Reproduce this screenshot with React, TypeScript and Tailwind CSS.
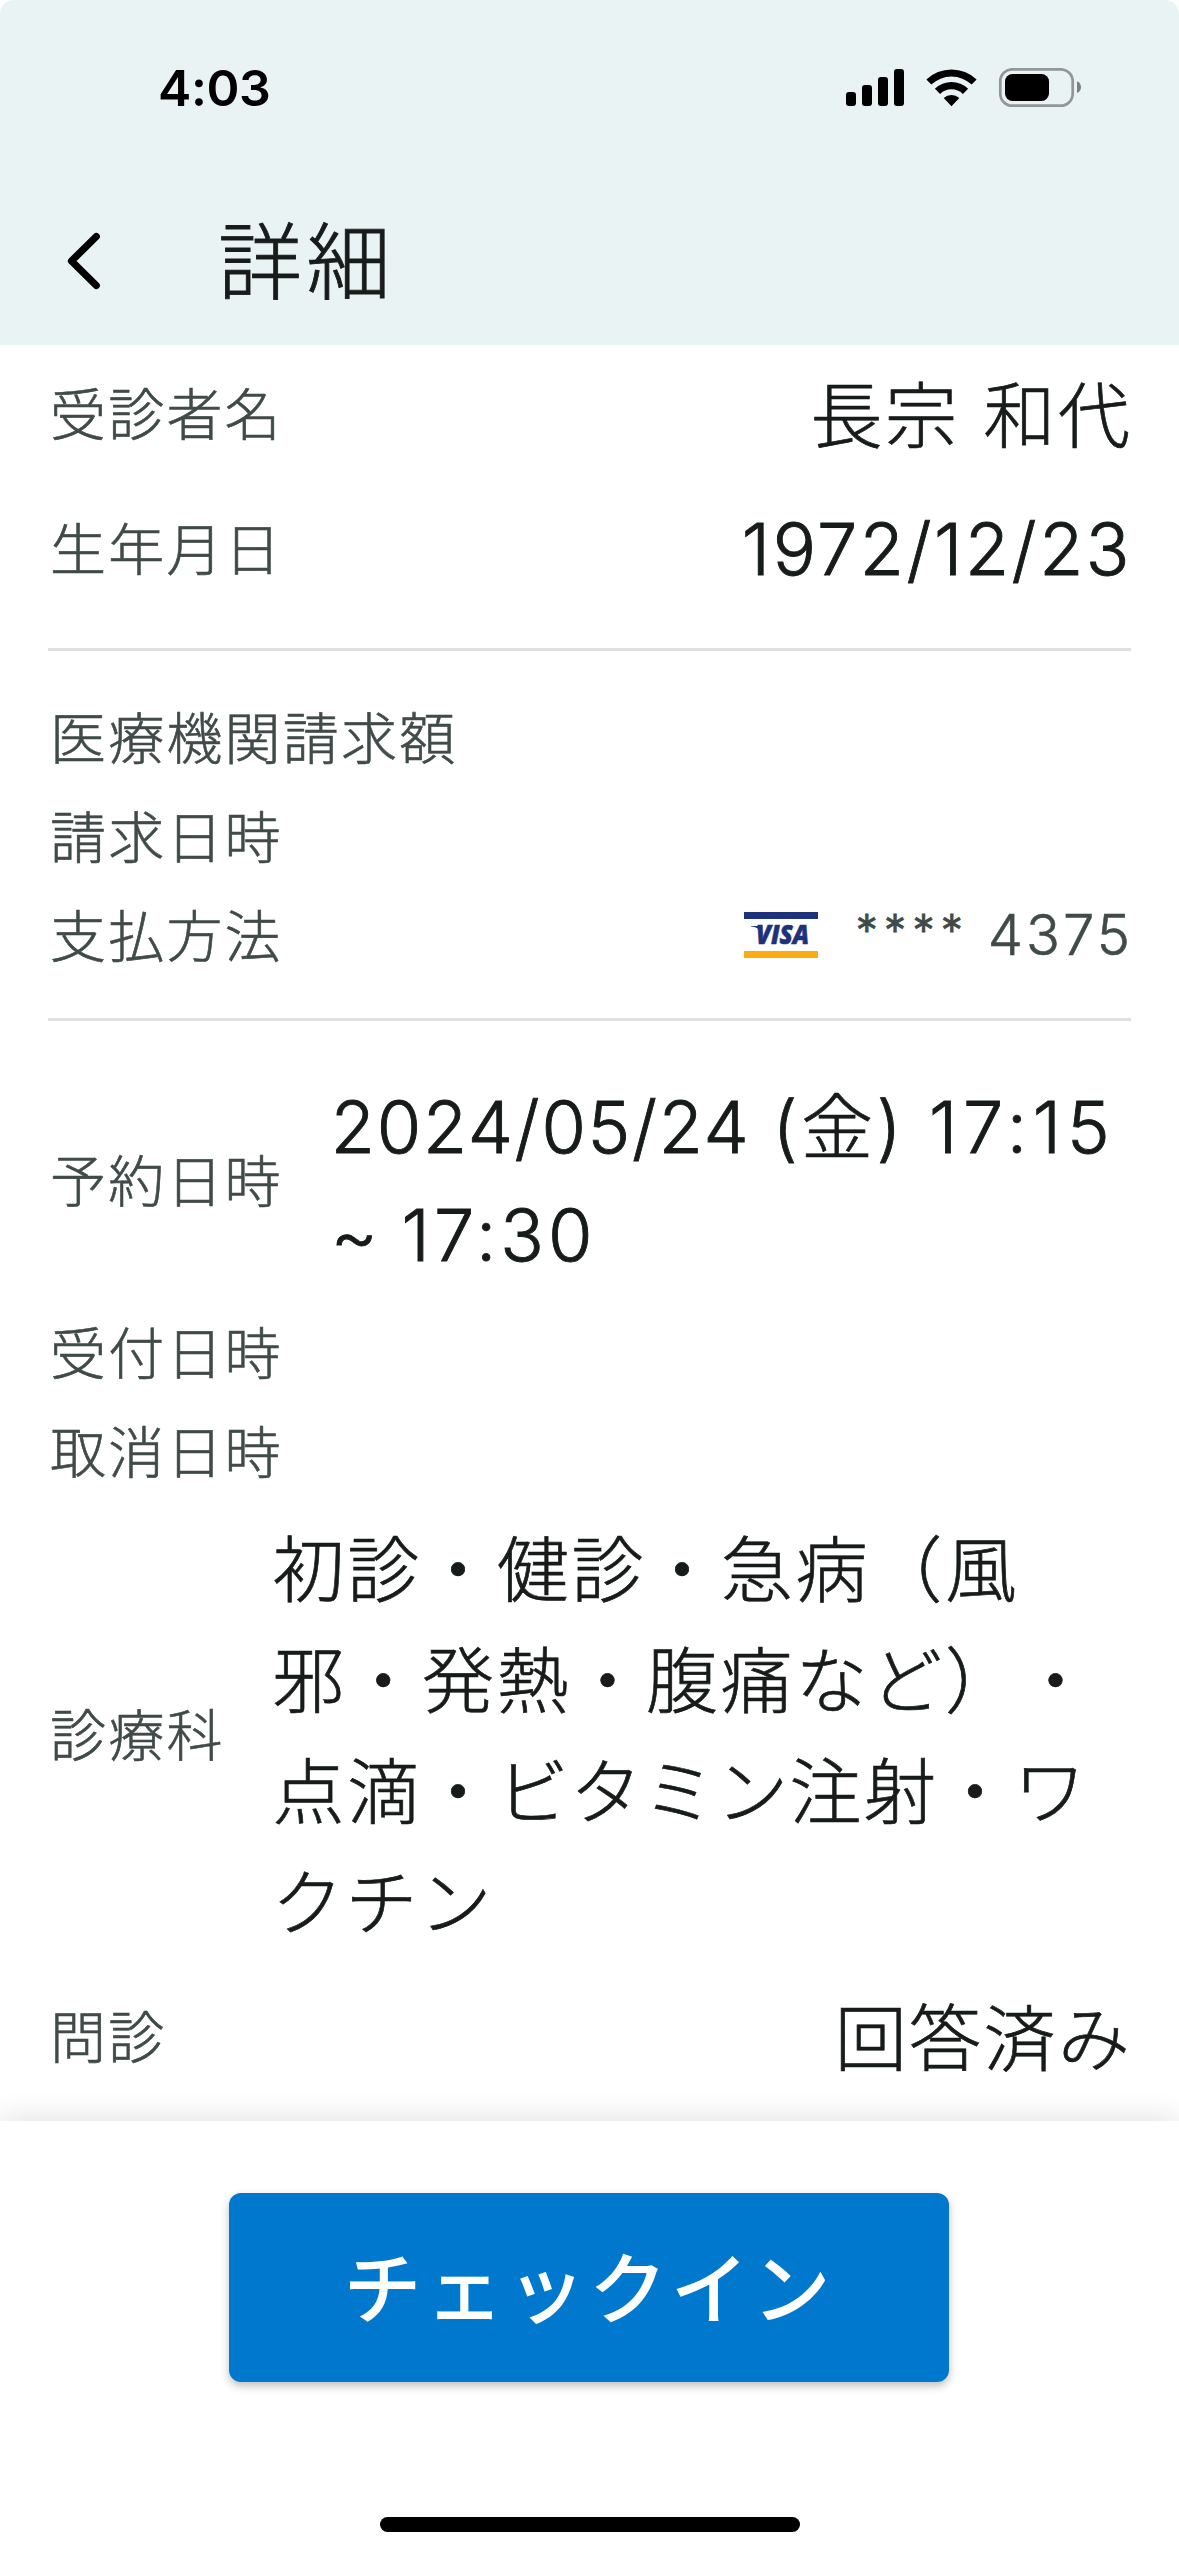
import type { ReactNode } from "react";

const CJK = "font-['Noto_Sans_CJK_JP',sans-serif]";
const LATIN = "font-[Inter,'Noto_Sans_CJK_JP',sans-serif]";
const VALUE = "relative -top-[3px] text-[72px] leading-[108px] font-light tracking-[2.3px] [-webkit-text-stroke:0.7px_#171b1a]";

function Label({ children }: { children: ReactNode }) {
  return (
    <span
      className={`${CJK} relative -top-[3px] shrink-0 whitespace-nowrap text-[56px] leading-[84px] font-light tracking-[2.2px] text-[#404b49] [-webkit-text-stroke:0.6px_#404b49]`}
    >
      {children}
    </span>
  );
}

function StatusIcons() {
  return (
    <svg className="block" width="236" height="40" viewBox="846 68 236 40" fill="#000">
      <rect x="846" y="92" width="10" height="14" rx="3" />
      <rect x="862" y="85" width="10" height="21" rx="3" />
      <rect x="878" y="77" width="10" height="29" rx="3" />
      <rect x="894" y="69" width="10" height="37" rx="3" />
      <path d="M926.4 79.5a36.5 36.5 0 0 1 50.2 0l-4.9 5.1a29.5 29.5 0 0 0-40.4 0z" />
      <path d="M934.9 88.7a24 24 0 0 1 33.2 0l-5.2 5.2a16.6 16.6 0 0 0-22.8 0z" />
      <path d="M943.7 98a11.4 11.4 0 0 1 15.6 0l-7.8 8.2z" />
      <rect x="1000.3" y="69.3" width="72.4" height="36.4" rx="12" fill="none" stroke="#929696" strokeWidth="2.7" />
      <rect x="1005" y="74" width="44" height="27" rx="7.5" />
      <path d="M1077 81.3c5.3 2.2 5.3 9.6 0 11.8z" fill="#7d8080" />
    </svg>
  );
}

function VisaLogo() {
  return (
    <div className="flex h-[46px] w-[74px] flex-col justify-between">
      <div className="h-[7px] bg-[#1d327b]" />
      <svg className="block overflow-visible" width="74" height="32" viewBox="0 0 74 32">
        <text x="12" y="25" textLength="53" lengthAdjust="spacingAndGlyphs" fontFamily="Open Sans" fontSize="26" fontWeight="800" fontStyle="italic" fill="#1d327b" stroke="#1d327b" strokeWidth="0.6">
          VISA
        </text>
        <path d="M7 7h9l3 9c-2-5-6-8-12-8.4z" fill="#1d327b" />
      </svg>
      <div className="h-[7px] bg-[#fcab10]" />
    </div>
  );
}

export default function App() {
  return (
    <div className="flex h-[2556px] w-[1179px] flex-col overflow-hidden bg-white text-[#171b1a]">
      <header className="h-[345px] shrink-0 rounded-t-[14px] bg-[#eaf3f4]">
        <div className="flex h-[176px] items-center justify-between pr-[97px] pl-[158px]">
          <span className={`${LATIN} text-[50px] leading-none font-semibold tracking-[-0.4px] text-black`}>4:03</span>
          <StatusIcons />
        </div>
        <div className="flex h-[169px] items-center pl-[67px]">
          <svg className="mt-[1px] block" width="34" height="66" viewBox="0 0 34 66" fill="none" stroke="#000" strokeWidth="7.2" strokeLinecap="round" strokeLinejoin="round">
            <path d="M29.3 8.5 4.5 33 29.3 57.5" />
          </svg>
          <h1 className={`${CJK} relative -top-[4px] ml-[117px] text-[84px] leading-[126px] font-light tracking-[4.5px] [-webkit-text-stroke:0.9px_#171b1a]`}>詳細</h1>
        </div>
      </header>

      <main className="flex h-[1776px] shrink-0 flex-col px-[48px]">
        <div className="flex h-[138px] items-center justify-between px-[2px]">
          <Label>受診者名</Label>
          <span className={`${CJK} ${VALUE} -mr-[3px] [word-spacing:6px]`}>長宗 和代</span>
        </div>
        <div className="flex h-[132px] items-center justify-between px-[2px]">
          <Label>生年月日</Label>
          <span className={`${LATIN} -mr-[3px] text-[72px] leading-[108px] font-light tracking-[2.5px] [-webkit-text-stroke:0.9px_#171b1a]`}>1972/12/23</span>
        </div>
        <div className="mt-[33px] h-[3px] shrink-0 bg-[#e0e0e0]" />

        <div className="mt-[37px] flex flex-col px-[2px]">
          <div className="flex h-[99px] items-center"><Label>医療機関請求額</Label></div>
          <div className="flex h-[99px] items-center"><Label>請求日時</Label></div>
          <div className="flex h-[99px] items-center justify-between">
            <Label>支払方法</Label>
            <div className="-mt-[2px] -mr-[4px] flex items-center">
              <VisaLogo />
              <span className={`${LATIN} ml-[38px] text-[56px] leading-[84px] font-light whitespace-pre tracking-[3px] text-[#404b49] [-webkit-text-stroke:0.6px_#404b49]`}>
                <span className="align-[9px] text-[44px] leading-none tracking-[6.3px] [-webkit-text-stroke:1px_#404b49]">****</span> 4375
              </span>
            </div>
          </div>
        </div>
        <div className="mt-[33px] h-[3px] shrink-0 bg-[#e0e0e0]" />

        <div className="mt-[52px] flex h-[216px] items-center gap-[48px] px-[2px]">
          <Label>予約日時</Label>
          <span className={`${LATIN} text-[72px] leading-[108px] font-light tracking-[1.7px] whitespace-nowrap [-webkit-text-stroke:0.9px_#171b1a]`}>
            2024/05/24 <span className="tracking-[3.5px]">(<span className={`${CJK} leading-none font-light [-webkit-text-stroke:0.7px_#171b1a]`}>金</span>) </span>
            <span className="tracking-[5.8px]">17:15</span>
            <br />~ <span className="tracking-[4.1px]">17:30</span>
          </span>
        </div>
        <div className="mt-[14px] flex h-[99px] items-center px-[2px]"><Label>受付日時</Label></div>
        <div className="flex h-[99px] items-center px-[2px]"><Label>取消日時</Label></div>
        <div className="mt-[12px] flex h-[444px] items-center gap-[48px] px-[2px]">
          <Label>診療科</Label>
          <p className={`${CJK} relative -top-[4px] text-[72px] leading-[111px] font-light tracking-[2.7px] whitespace-nowrap [-webkit-text-stroke:0.7px_#171b1a] [text-spacing-trim:space-all]`}>
            初診・健診・急病（風
            <br />
            邪・発熱・腹痛など）・
            <br />
            点滴・<span className="tracking-[1.2px]">ビタミン</span>注射・ワ
            <br />
            <span className="-ml-px tracking-[2px]">クチン</span>
          </p>
        </div>
        <div className="mt-[30px] flex h-[99px] items-center justify-between px-[2px]">
          <Label>問診</Label>
          <span className={`${CJK} ${VALUE} -mr-[3px]`}>回答済み</span>
        </div>
      </main>

      <footer className="relative flex h-[435px] shrink-0 flex-col items-center bg-white pt-[72px] shadow-[0_0_30px_rgba(0,0,0,0.14)]">
        <button className={`${CJK} -ml-px h-[189px] w-[720px] rounded-[12px] bg-[#0078ce] pb-[7px] text-[78px] leading-none font-medium tracking-[3.8px] text-white shadow-[0_4px_8px_rgba(0,0,0,0.25)]`}>
          チェックイン
        </button>
        <div className="mt-[135px] h-[15px] w-[420px] rounded-full bg-black" />
      </footer>
    </div>
  );
}
